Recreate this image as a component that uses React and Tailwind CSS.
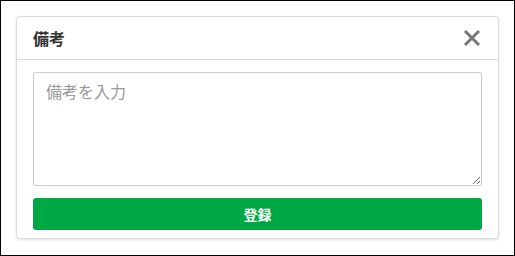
import React from "react";

export default function App() {
  return (
    <div
      className="w-[515px] h-[256px] border border-black bg-white p-[15px] box-border"
      style={{ fontFamily: '"Noto Sans CJK JP", "Noto Sans", sans-serif' }}
    >
      <div className="flex h-[223px] flex-col rounded-[4px] border border-[#dcdcdc] bg-white shadow-[0_1px_3px_rgba(0,0,0,0.12)]">
        <div className="flex h-[43px] items-center justify-between border-b border-[#dcdcdc] pl-[16px] pr-[15px]">
          <span className="text-[16px] font-bold leading-none text-[#333]">備考</span>
          <button className="flex h-[22px] w-[22px] items-center justify-center" aria-label="close">
            <svg width="18" height="18" viewBox="0 0 18 18">
              <path d="M2 2 L16 16 M16 2 L2 16" stroke="#777" strokeWidth="3" strokeLinecap="butt" />
            </svg>
          </button>
        </div>
        <div className="flex flex-col gap-[12px] px-[16px] pt-[12px]">
          <textarea
            className="h-[114px] w-full resize-y rounded-[2px] border border-[#cccccc] px-[12px] py-[6px] text-[16px] leading-[24px] text-[#333] outline-none placeholder:text-[#999]"
            placeholder="備考を入力"
          />
          <button className="h-[32px] w-full rounded-[3px] bg-[#00a843] text-[14px] font-bold text-white">
            登録
          </button>
        </div>
      </div>
    </div>
  );
}
